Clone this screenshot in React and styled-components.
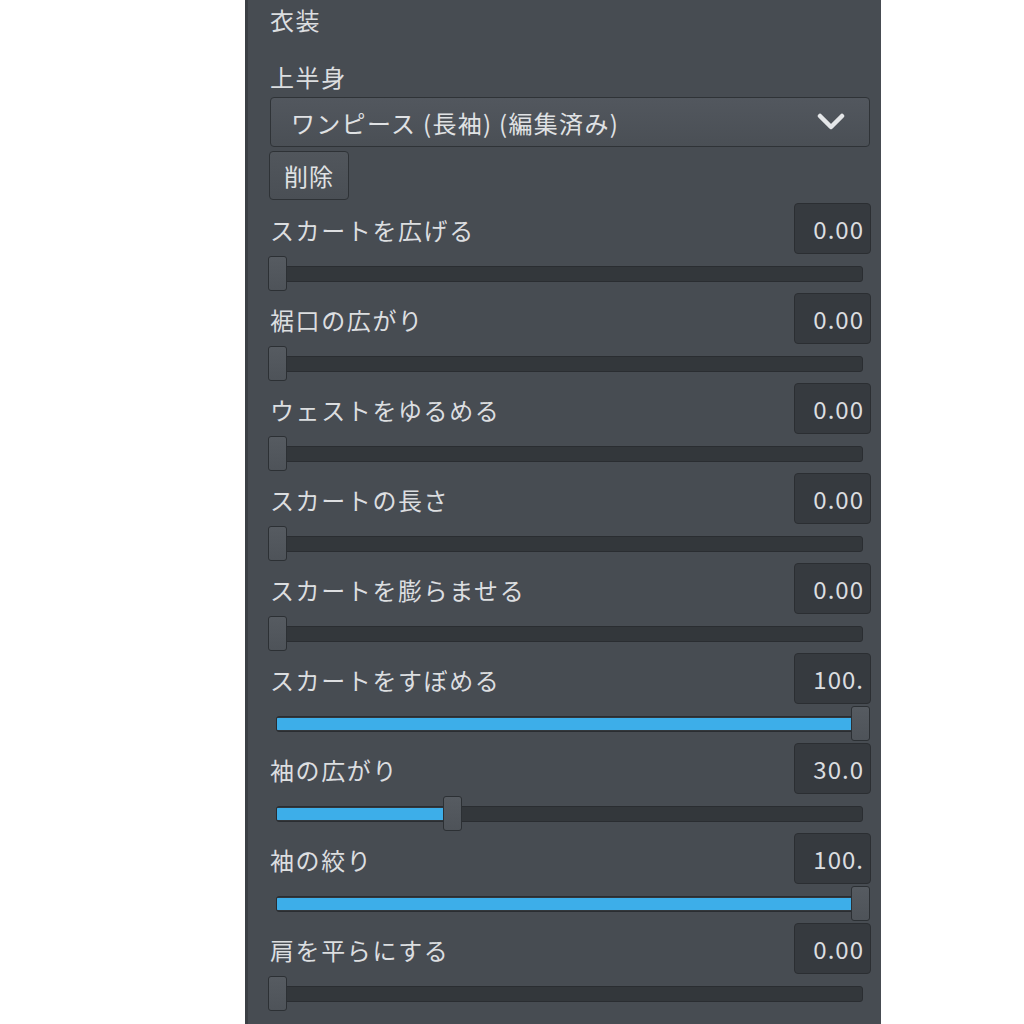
import styled, { createGlobalStyle } from 'styled-components';

const sliders = [
  { label: 'スカートを広げる', value: 0, text: '0.00' },
  { label: '裾口の広がり', value: 0, text: '0.00' },
  { label: 'ウェストをゆるめる', value: 0, text: '0.00' },
  { label: 'スカートの長さ', value: 0, text: '0.00' },
  { label: 'スカートを膨らませる', value: 0, text: '0.00' },
  { label: 'スカートをすぼめる', value: 100, text: '100.' },
  { label: '袖の広がり', value: 30, text: '30.0' },
  { label: '袖の絞り', value: 100, text: '100.' },
  { label: '肩を平らにする', value: 0, text: '0.00' },
];

const GlobalStyle = createGlobalStyle`
  html, body {
    margin: 0;
    padding: 0;
    background: #ffffff;
    overflow: hidden;
  }
  body {
    font-family: 'Noto Sans CJK JP', 'Noto Sans', sans-serif;
  }
`;

export default function App() {
  return (
    <>
      <GlobalStyle />
      <Page>
        <Panel>
          <Title>衣装</Title>
          <GroupLabel>上半身</GroupLabel>
          <Dropdown type="button">
            <span>ワンピース (長袖) (編集済み)</span>
            <Chevron viewBox="0 0 28 18" aria-hidden="true">
              <path d="M3 3 L14 14 L25 3" />
            </Chevron>
          </Dropdown>
          <DeleteButton type="button">削除</DeleteButton>
          <Sliders>
            {sliders.map((s) => (
              <SliderRow key={s.label}>
                <SliderHeader>
                  <SliderLabel>{s.label}</SliderLabel>
                  <NumberBox>{s.text}</NumberBox>
                </SliderHeader>
                <SliderTrackArea>
                  <Track>
                    <Fill style={{ width: `${s.value}%` }} />
                  </Track>
                  <Thumb style={{ left: `calc(${s.value / 100} * (100% - 19px))` }} />
                </SliderTrackArea>
              </SliderRow>
            ))}
          </Sliders>
        </Panel>
      </Page>
    </>
  );
}

const Page = styled.div`
  width: 1024px;
  height: 1024px;
  display: flex;
  padding-left: 245px;
  box-sizing: border-box;
  background: #ffffff;
`;

const Panel = styled.div`
  width: 636px;
  height: 1024px;
  background: #474c52;
  border-left: 3px solid #3b3f44;
  box-sizing: border-box;
  padding: 0 11px 0 22px;
  display: flex;
  flex-direction: column;
  color: #dcdee0;
  font-size: 24px;
  letter-spacing: 1.6px;
`;

const Title = styled.div`
  height: 40px;
  line-height: 40px;
`;

const GroupLabel = styled.div`
  margin-top: 22px;
  height: 30px;
  line-height: 30px;
`;

const Dropdown = styled.button`
  margin-top: 5px;
  height: 50px;
  width: 100%;
  display: flex;
  align-items: center;
  justify-content: space-between;
  padding: 0 24px 0 20px;
  box-sizing: border-box;
  background: linear-gradient(#52575e, #4a4f55);
  border: 1px solid #2f3337;
  border-radius: 4px;
  color: #e0e2e4;
  font: inherit;
  letter-spacing: 1.3px;
  text-align: left;
`;

const Chevron = styled.svg`
  width: 28px;
  height: 18px;
  fill: none;
  stroke: #e4e6e8;
  stroke-width: 4.5;
  stroke-linecap: round;
  stroke-linejoin: round;
`;

const DeleteButton = styled.button`
  margin-top: 4px;
  margin-left: -1px;
  align-self: flex-start;
  width: 80px;
  height: 49px;
  background: linear-gradient(#51565c, #4a4f55);
  border: 1px solid #2e3236;
  border-radius: 4px;
  color: #e0e2e4;
  font: inherit;
  letter-spacing: 1px;
  padding: 0;
`;

const Sliders = styled.div`
  margin-top: 3px;
  display: flex;
  flex-direction: column;
`;

const SliderRow = styled.div`
  height: 90px;
  display: flex;
  flex-direction: column;
`;

const SliderHeader = styled.div`
  height: 51px;
  display: flex;
  align-items: center;
  justify-content: space-between;
`;

const SliderLabel = styled.span`
  margin-top: 1px;
`;

const NumberBox = styled.div`
  width: 77px;
  height: 51px;
  box-sizing: border-box;
  background: #363a3f;
  border: 1px solid #2b2e32;
  border-radius: 4px;
  text-align: right;
  padding-right: 6px;
  line-height: 49px;
  color: #dcdee0;
  letter-spacing: 1px;
  overflow: hidden;
  margin-right: -1px;
`;

const SliderTrackArea = styled.div`
  position: relative;
  margin-top: 2px;
  margin-left: -2px;
  height: 35px;
`;

const Track = styled.div`
  position: absolute;
  left: 8px;
  right: 7px;
  top: 10px;
  height: 16px;
  box-sizing: border-box;
  background: #33373b;
  border: 1px solid #2a2d31;
  border-radius: 3px;
  overflow: hidden;
  padding: 1px 0;
`;

const Fill = styled.div`
  height: 100%;
  background: #3daee9;
`;

const Thumb = styled.div`
  position: absolute;
  top: 0;
  width: 19px;
  height: 35px;
  box-sizing: border-box;
  background: linear-gradient(#565b61, #4e5359);
  border: 1px solid #2c3034;
  border-radius: 3px;
`;
